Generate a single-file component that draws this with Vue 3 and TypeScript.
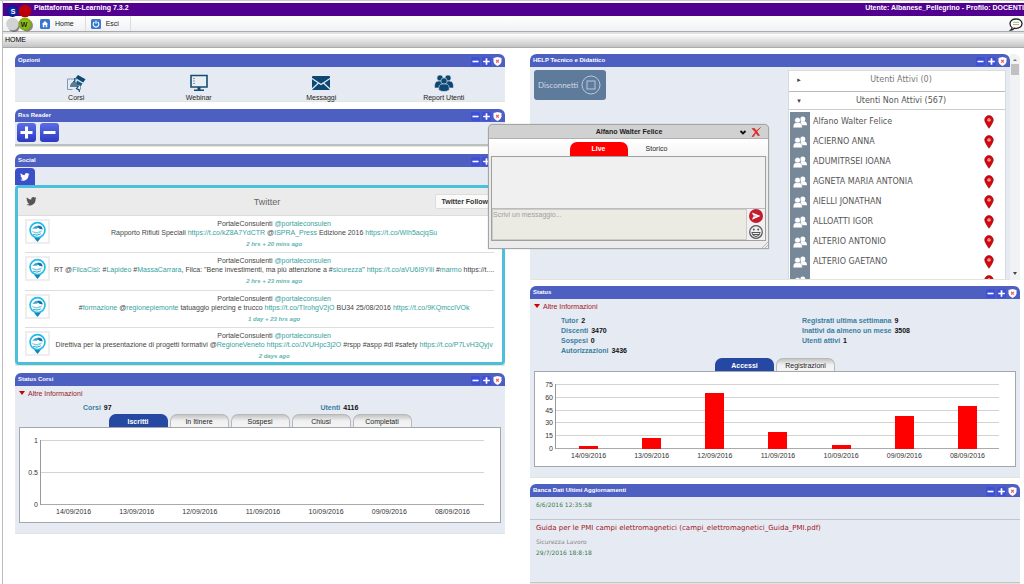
<script setup lang="ts">
import { ref } from 'vue'

interface Piece {
  text: string
  link?: boolean
}
interface Tweet {
  pieces: Piece[]
  time: string
}

const controls = [
  { icon: 'minus', label: 'Riduci' },
  { icon: 'plus', label: 'Espandi' },
  { icon: 'shield', label: 'Chiudi' },
]

const options = [
  { icon: 'course', label: 'Corsi' },
  { icon: 'screen', label: 'Webinar' },
  { icon: 'mail', label: 'Messaggi' },
  { icon: 'group', label: 'Report Utenti' },
]

const t = (text: string): Piece => ({ text })
const l = (text: string): Piece => ({ text, link: true })

const tweets: Tweet[] = [
  {
    pieces: [t('Rapporto Rifiuti Speciali '), l('https://t.co/kZ8A7YdCTR'), t(' @'), l('ISPRA_Press'), t(' Edizione 2016 '), l('https://t.co/WIh5acjqSu')],
    time: '2 hrs + 20 mins ago',
  },
  {
    pieces: [t('RT @'), l('FilcaCisl'), t(': #'), l('Lapideo'), t(' #'), l('MassaCarrara'), t(', Filca: "Bene investimenti, ma più attenzione a #'), l('sicurezza'), t('" '), l('https://t.co/aVU6I9YIli'), t(' #'), l('marmo'), t(' https://t....')],
    time: '2 hrs + 23 mins ago',
  },
  {
    pieces: [t('#'), l('formazione'), t(' @'), l('regionepiemonte'), t(' tatuaggio piercing e trucco '), l('https://t.co/TIrohgV2jO'), t(' BU34 25/08/2016 '), l('https://t.co/9KQmccIVOk')],
    time: '1 day + 23 hrs ago',
  },
  {
    pieces: [t('Direttiva per la presentazione di progetti formativi @'), l('RegioneVeneto'), t(' '), l('https://t.co/JVUHpc3j2O'), t(' #rspp #aspp #dl #safety '), l('https://t.co/P7LvH3Qyjv')],
    time: '2 days ago',
  },
]

const users = [
  'Alfano Walter Felice', 'ACIERNO ANNA', 'ADUMITRSEI IOANA', 'AGNETA MARIA ANTONIA', 'AIELLI JONATHAN',
  'ALLOATTI IGOR', 'ALTERIO ANTONIO', 'ALTERIO GAETANO', '',
]

const days = ['14/09/2016', '13/09/2016', '12/09/2016', '11/09/2016', '10/09/2016', '09/09/2016', '08/09/2016']
const accesses = [4, 13, 65, 20, 5, 38, 50]
const accessMax = 75
const accessScale = [75, 60, 45, 30, 15, 0]
const courseScale = ['1', '0.5', '0']

const courseTabs = ['Iscritti', 'In Itinere', 'Sospesi', 'Chiusi', 'Completati']
const statusTabs = ['Accessi', 'Registrazioni']
const courseTab = ref('Iscritti')
const statusTab = ref('Accessi')
const message = ref('')

const statusLeft = [['Tutor', '2'], ['Discenti', '3470'], ['Sospesi', '0'], ['Autorizzazioni', '3436']]
const statusRight = [['Registrati ultima settimana', '9'], ['Inattivi da almeno un mese', '3508'], ['Utenti attivi', '1']]
</script>

<template>
  <svg class="sprite" aria-hidden="true">
    <symbol id="i-minus" viewBox="0 0 9 9"><rect width="9" height="9" rx="1.5" fill="#3f50d6" /><path d="M1.500 4.500h6" stroke="#fff" stroke-width="1.600" /></symbol>
    <symbol id="i-plus" viewBox="0 0 9 9"><rect width="9" height="9" rx="1.5" fill="#3f50d6" /><path d="M1.200 4.500h6.600M4.500 1.200v6.600" stroke="#fff" stroke-width="1.700" /></symbol>
    <symbol id="i-shield" viewBox="0 0 9 9"><path d="M4.5 0 8.500 1v3.500Q8.200 7.400 4.5 9 .8 7.400.5 4.500V1z" fill="#fff" /><path d="M3.200 2.900l2.600 2.800M5.800 2.900 3.200 5.700" stroke="#f0566a" stroke-width="1.200" /></symbol>
    <symbol id="i-course" viewBox="0 0 20 18">
      <path d="M11 5H1.500v10.500h5M14.500 11v4.500h-2" fill="none" stroke="#7f99ad" stroke-width="1" />
      <path d="M4 13q0-5 5-5.500l4 3-1 2.500z" fill="#5c7d97" />
      <path d="M9.500 4 12 1l7.500 4.200-2.300 3.200z" fill="#0f4a73" />
      <path d="M11 6.500l5.500 3-1.500 2.500q-3-.2-4.800-2.500z" fill="#1d5d88" />
      <path d="M8.800 4v3l-1.500 1M12.500 12l-2 2.500 2.500 1.500.5 2" fill="none" stroke="#0f4a73" stroke-width="1.200" />
    </symbol>
    <symbol id="i-screen" viewBox="0 0 20 18">
      <path d="M2 1.500h16v11.500H2z" fill="#e9eef4" stroke="#174c70" stroke-width="1.600" />
      <path d="M4.500 4.500h1M4.500 7h1M4.500 9.500h1" stroke="#174c70" stroke-width="1" />
      <path d="M8.500 13h3v2.500H15V17H5v-1.500h3.500z" fill="#174c70" />
    </symbol>
    <symbol id="i-mail" viewBox="0 0 20 18">
      <rect x="1" y="2" width="18" height="14" rx="1" fill="#0b4873" />
      <path d="M1 4.500l9 6 9-6M1 15l6.500-6M19 15l-6.500-6" fill="none" stroke="#e7ebf3" stroke-width="1.200" />
    </symbol>
    <symbol id="i-group" viewBox="0 0 20 18">
      <g fill="#0b4873" stroke="#e7ebf3" stroke-width=".6">
        <circle cx="6" cy="4" r="3.100" /><circle cx="14" cy="4" r="3.100" />
        <path d="M.5 14q-.5-7 4-7h3q2.500.5 2.500 7zM10 14q0-6.500 2.500-7h3q4.500 0 4 7z" />
        <circle cx="10" cy="7" r="3.200" /><path d="M4.700 16q-.2-6 3.300-6h4q3.500 0 3.300 6-5.300 3.200-10.600 0z" />
      </g>
    </symbol>
    <symbol id="i-bird" viewBox="0 0 24 24">
      <path d="M23 4.600a9 9 0 0 1-2.700.8 4.600 4.600 0 0 0 2-2.600 9 9 0 0 1-2.900 1.100A4.600 4.600 0 0 0 11.500 8 13 13 0 0 1 2 3.200a4.600 4.600 0 0 0 1.400 6.200 4.600 4.600 0 0 1-2-.6 4.600 4.600 0 0 0 3.600 4.600 4.600 4.600 0 0 1-2 .1 4.600 4.600 0 0 0 4.300 3.200A9.300 9.300 0 0 1 .5 18.600 13 13 0 0 0 20.700 7a9 9 0 0 0 2.300-2.400z" />
    </symbol>
    <symbol id="i-portal" viewBox="0 0 22 22">
      <path d="M7 17h8l-4 5z" fill="#1383b8" />
      <circle cx="11" cy="9.500" r="7.800" fill="#fff" stroke="#22bce8" stroke-width="1.800" />
      <path d="M5.500 8q4-4.500 9.500-2.800l1.500 3.300q-4-2-7-.3z" fill="#3ba4cf" />
      <path d="M11 5.200q4.500 0 5.500 3.600l-3.500-.8z" fill="#11699d" />
      <path d="M5 10q3 2 6.500 1.200L16 9.800q-1 3-5 3.200-5 .3-6-3z" fill="#8ccce4" />
      <path d="M6.500 14q4 1.800 8-.5" fill="none" stroke="#2e9cc9" stroke-width="1" />
    </symbol>
    <symbol id="i-people" viewBox="0 0 14 12">
      <g fill="#fff"><circle cx="9.800" cy="2.900" r="2.500" /><path d="M7.500 5.200h4.300q2.300.8 2.200 4H8z" /></g>
      <g fill="#fff" stroke="#778899" stroke-width=".4"><circle cx="4.600" cy="4.200" r="2.800" /><path d="M.2 11.800Q0 7.200 2.700 6.700h3.900Q9.500 7.200 9.200 11.800z" /></g>
    </symbol>
    <symbol id="i-pin" viewBox="0 0 10 14">
      <path d="M5 .6A4.300 4.300 0 0 0 .7 5Q.8 7.500 5 13.300 9.200 7.500 9.300 5A4.300 4.300 0 0 0 5 .6z" fill="#d5060c" stroke="#8d1115" stroke-width=".6" />
      <circle cx="5" cy="4.900" r="1.700" fill="#f3c9c9" /><path d="M4 4.900h2" stroke="#c22" stroke-width=".7" />
    </symbol>
  </svg>

  <div class="page">
    <header class="top">
      <div class="brand-bar">
        <h1>Piattaforma E-Learning 7.3.2</h1>
        <span>Utente: Albanese_Pellegrino - Profilo: DOCENTI</span>
      </div>
      <nav class="menu">
        <a href="#">
          <svg viewBox="0 0 10 10"><rect width="10" height="10" rx="1.500" fill="#3676cf" /><path d="M1.800 5.200 5 2l3.200 3.200h-1V8.200H5.700V6H4.300v2.200H2.800v-3z" fill="#fff" /></svg>
          Home
        </a>
        <a href="#">
          <svg viewBox="0 0 10 10"><rect width="10" height="10" rx="1.500" fill="#3676cf" /><path d="M3.400 3a2.800 2.800 0 1 0 3.200 0M5 1.600v3.200" fill="none" stroke="#fff" stroke-width="1.100" /></svg>
          Esci
        </a>
        <button class="bubble" type="button" aria-label="Chat">
          <svg viewBox="0 0 14 13"><path d="M7 1c3.500 0 6 1.900 6 4.600S10.500 10.300 7 10.300q-1 0-1.800-.2Q4 12 1.800 12q1.300-1 1.200-2.500Q1 8.300 1 5.600C1 2.900 3.500 1 7 1z" fill="#fff" stroke="#222" stroke-width="1.300" /><path d="M4 4.300h6" stroke="#80cf80" /><path d="M4 6.600h6" stroke="#eb8a8a" /></svg>
        </button>
      </nav>
      <div class="crumb">HOME</div>
      <svg class="logo" viewBox="0 0 30 30" role="img" aria-label="SW">
        <defs>
          <radialGradient id="gb"><stop offset="0" stop-color="#1d38c4" /><stop offset="1" stop-color="#06198c" /></radialGradient>
          <radialGradient id="gg"><stop offset="0" stop-color="#a6d614" /><stop offset="1" stop-color="#7da60c" /></radialGradient>
        </defs>
        <g fill="#555" opacity=".7"><circle cx="9" cy="23" r="6" /><circle cx="22" cy="22.500" r="6" /></g>
        <circle cx="7.500" cy="8" r="6" fill="url(#gb)" /><circle cx="20" cy="8" r="6.300" fill="#bd0008" />
        <circle cx="7.500" cy="21" r="6.300" fill="#d2d2d2" /><circle cx="20" cy="21" r="6.500" fill="url(#gg)" />
        <text x="8" y="11" fill="#fff">S</text><text x="19" y="23.500" fill="#123">W</text>
      </svg>
    </header>

    <main class="columns">
      <div class="column">
        <section class="panel">
          <div class="bar"><h2>Opzioni</h2><button v-for="c in controls" :key="c.icon" type="button" :aria-label="c.label"><svg><use :href="'#i-' + c.icon" /></svg></button></div>
          <div class="options">
            <a v-for="o in options" :key="o.label" href="#"><svg><use :href="'#i-' + o.icon" /></svg>{{ o.label }}</a>
          </div>
        </section>

        <section class="panel">
          <div class="bar"><h2>Rss Reader</h2><button v-for="c in controls" :key="c.icon" type="button" :aria-label="c.label"><svg><use :href="'#i-' + c.icon" /></svg></button></div>
          <div class="rss">
            <button type="button" aria-label="Aggiungi"><svg viewBox="0 0 19 19"><path d="M9.500 3.500v12M3.500 9.500h12" /></svg></button>
            <button type="button" aria-label="Rimuovi"><svg viewBox="0 0 19 19"><path d="M3.500 9.500h12" /></svg></button>
          </div>
        </section>

        <section class="panel">
          <div class="bar"><h2>Social</h2><button v-for="c in controls" :key="c.icon" type="button" :aria-label="c.label"><svg><use :href="'#i-' + c.icon" /></svg></button></div>
          <div class="social-tabs"><button type="button" aria-label="Twitter"><svg><use href="#i-bird" /></svg></button></div>
          <div class="feed">
            <div class="feed-head">
              <svg><use href="#i-bird" /></svg>
              <h3>Twitter</h3>
              <div class="follow"><button type="button">Twitter Follow</button></div>
            </div>
            <ul>
              <li v-for="tweet in tweets" :key="tweet.time">
                <span class="avatar"><svg><use href="#i-portal" /></svg></span>
                <div class="tweet">
                  <p>PortaleConsulenti <a href="#">@portaleconsulen</a></p>
                  <p><template v-for="(piece, i) in tweet.pieces" :key="i"><a v-if="piece.link" href="#">{{ piece.text }}</a><template v-else>{{ piece.text }}</template></template></p>
                  <time>{{ tweet.time }}</time>
                </div>
              </li>
            </ul>
          </div>
        </section>

        <section class="panel status">
          <div class="bar"><h2>Status Corsi</h2><button v-for="c in controls" :key="c.icon" type="button" :aria-label="c.label"><svg><use :href="'#i-' + c.icon" /></svg></button></div>
          <a class="more" href="#">Altre Informazioni</a>
          <div class="stats course-stats">
            <p>Corsi <b>97</b></p>
            <p>Utenti <b>4116</b></p>
          </div>
          <div class="tabs"><button v-for="name in courseTabs" :key="name" type="button" :class="{ on: name === courseTab }" @click="courseTab = name">{{ name }}</button></div>
          <div class="chart">
            <div class="scale"><span v-for="s in courseScale" :key="s">{{ s }}</span></div>
            <div class="grid-lines"><i v-for="s in courseScale" :key="s"></i></div>
            <div class="days"><span v-for="d in days" :key="d">{{ d }}</span></div>
          </div>
        </section>
      </div>

      <div class="column">
        <section class="help-frame">
          <div class="help panel">
            <div class="bar"><h2>HELP Tecnico e Didattico</h2><button v-for="c in controls" :key="c.icon" type="button" :aria-label="c.label"><svg><use :href="'#i-' + c.icon" /></svg></button></div>
            <div class="help-body">
              <button class="disconnect" type="button">Disconnetti
                <svg viewBox="0 0 20 20"><circle cx="10" cy="10" r="9" /><rect x="6" y="6" width="8" height="8" /></svg>
              </button>
              <div class="people">
                <button class="fold" type="button"><i>▸</i><span>Utenti Attivi (0)</span></button>
                <button class="fold open" type="button"><i>▾</i><span>Utenti Non Attivi (567)</span></button>
                <ul>
                  <li v-for="(u, i) in users" :key="i">
                    <span class="face"><svg><use href="#i-people" /></svg></span>
                    <span class="name">{{ u }}</span>
                    <svg class="pin"><use href="#i-pin" /></svg>
                  </li>
                </ul>
              </div>
            </div>
          </div>
          <div class="scroll"><i class="up"></i><i class="thumb"></i><i class="down"></i></div>
        </section>

        <section class="panel status">
          <div class="bar"><h2>Status</h2><button v-for="c in controls" :key="c.icon" type="button" :aria-label="c.label"><svg><use :href="'#i-' + c.icon" /></svg></button></div>
          <a class="more" href="#">Altre Informazioni</a>
          <div class="stats user-stats">
            <div><p v-for="s in statusLeft" :key="s[0]">{{ s[0] }} <b>{{ s[1] }}</b></p></div>
            <div><p v-for="s in statusRight" :key="s[0]">{{ s[0] }} <b>{{ s[1] }}</b></p></div>
          </div>
          <div class="tabs"><button v-for="name in statusTabs" :key="name" type="button" :class="{ on: name === statusTab }" @click="statusTab = name">{{ name }}</button></div>
          <div class="chart">
            <div class="scale"><span v-for="s in accessScale" :key="s">{{ s }}</span></div>
            <div class="grid-lines"><i v-for="s in accessScale" :key="s"></i></div>
            <div class="bars"><i v-for="(a, i) in accesses" :key="i" :style="{ height: (a / accessMax) * 100 + '%' }"></i></div>
            <div class="days"><span v-for="d in days" :key="d">{{ d }}</span></div>
          </div>
        </section>

        <section class="panel news">
          <div class="bar"><h2>Banca Dati Ultimi Aggiornamenti</h2><button v-for="c in controls" :key="c.icon" type="button" :aria-label="c.label"><svg><use :href="'#i-' + c.icon" /></svg></button></div>
          <article><time>6/6/2016 12:35:58</time></article>
          <article>
            <a href="#">Guida per le PMI campi elettromagnetici (campi_elettromagnetici_Guida_PMI.pdf)</a>
            <p>Sicurezza Lavoro</p>
            <time>29/7/2016 18:8:18</time>
          </article>
        </section>
      </div>
    </main>

    <div class="chat" role="dialog" aria-label="Alfano Walter Felice">
      <div class="chat-title">
        <h2>Alfano Walter Felice</h2>
        <button type="button" aria-label="Riduci"><svg viewBox="0 0 10 10"><path d="M2.500 4l2.500 2.500L7.500 4" fill="none" stroke="#111" stroke-width="1.800" /></svg></button>
        <button type="button" aria-label="Chiudi"><svg viewBox="0 0 10 10"><path d="M1 1.500h2.500Q6 4.500 8.500 8.500H6.800Q4 4 1 1.500zM9.500.5Q5 3.500 1 9.500h1.500Q5 4.500 9.500.5z" fill="#d22" stroke="#d22" stroke-width=".6" /></svg></button>
      </div>
      <div class="chat-tabs"><button class="live" type="button">Live</button><button type="button">Storico</button></div>
      <div class="chat-box">
        <div class="log"></div>
        <div class="compose">
          <textarea v-model="message" aria-label="Messaggio" placeholder="Scrivi un messaggio..."></textarea>
          <div class="actions">
            <button type="button" aria-label="Invia"><svg viewBox="0 0 14 14"><circle cx="7" cy="7" r="7" fill="#c31c2e" /><path d="M3 3.500 11.500 7 3 10.800l1.200-3.200L8 7 4.200 6.400z" fill="#fff" /></svg></button>
            <button type="button" aria-label="Emoticon"><svg viewBox="0 0 14 14"><g fill="none" stroke="#555"><circle cx="7" cy="7" r="6.300" stroke-width="1.200" /><path d="M2.800 7.500h8.400Q10.500 11.500 7 11.500T2.800 7.500zM4 9.500h6" /></g><circle cx="4.800" cy="4.500" r="1" fill="#555" /><circle cx="9.200" cy="4.500" r="1" fill="#555" /></svg></button>
          </div>
        </div>
      </div>
      <svg class="grip" viewBox="0 0 6 6"><path d="M0 6 6 0M3 6l3-3" stroke="#aaa" stroke-width=".8" /></svg>
    </div>
  </div>
</template>

<style>
html, body { background: #fff; }
</style>

<style scoped>
* { box-sizing: border-box; margin: 0; padding: 0; }
.sprite { position: absolute; width: 0; height: 0; }
svg { display: block; flex: none; }
a { color: inherit; text-decoration: none; }
ul { list-style: none; }
button { border: 0; background: none; font: inherit; color: inherit; cursor: pointer; }
.page { position: relative; min-height: 100vh; font: 7px/10px "Liberation Sans", Arial, sans-serif; color: #222; border-top: 1px solid #ccc; overflow: hidden; }
.page::before { content: ""; position: absolute; left: 2px; top: 0; bottom: 0; width: 1px; background: #bbb; }

.top { position: relative; margin-left: 3px; padding-top: 2px; }
.brand-bar { display: flex; justify-content: space-between; height: 13px; padding-left: 31px; background: #52008f; color: #fff; font-weight: bold; line-height: 10px; white-space: nowrap; }
.brand-bar h1 { font-size: 7px; }
.menu { display: flex; height: 16px; padding-left: 32px; background: linear-gradient(#fff, #f0f1f5); border-bottom: 1px solid #aaa; }
.menu a { display: flex; align-items: center; gap: 5px; padding: 0 11px 0 5px; border-right: 1px solid #ddd; }
.menu a svg { width: 10px; height: 10px; }
.bubble { margin-left: auto; padding: 2px 1px 0 0; }
.bubble svg { width: 14px; height: 13px; }
.crumb { height: 16px; padding: 1px 2px; border-top: 2px solid #e2e2e2; background: linear-gradient(#fff, #c4c4c4); border-bottom: 1px solid #aaa; color: #000; }
.logo { position: absolute; left: 2px; top: 2px; width: 30px; height: 30px; }
.logo text { font: bold 7px "Liberation Sans", sans-serif; text-anchor: middle; }

.columns { display: grid; grid-template-columns: minmax(0, 1fr) minmax(0, 1fr); gap: 25px; align-items: start; padding: 6px 4px 0 15px; }
.column { display: flex; flex-direction: column; gap: 7px; }
.column + .column { gap: 6px; }
.panel { background: #e6ebf3; border-radius: 6px 6px 0 0; border-bottom: 1px solid #e0e6dc; }
.bar { display: flex; align-items: center; gap: 2px; height: 13px; padding: 2px 3px 0; border-radius: 6px 6px 0 0; background: #4d60c2; color: #fff; }
.bar h2 { flex: 1; font: bold 6px/9px "Liberation Sans", Arial, sans-serif; padding-bottom: 2px; }
.bar button svg { width: 9px; height: 9px; }

.options { display: grid; grid-template-columns: repeat(4, 1fr); height: 34px; padding-top: 7px; }
.options a { display: flex; flex-direction: column; align-items: center; gap: 1px; line-height: 9px; }
.options svg { width: 20px; height: 18px; }

.rss { display: flex; gap: 4px; height: 24px; padding: 1px 2px; border-bottom: 2px solid #bdc0c0; }
.rss button { width: 19px; height: 19px; border-radius: 3px; background: linear-gradient(#5a6ce6, #2d3cbf); }
.rss path { stroke: #fff; stroke-width: 3; }

.social-tabs { padding-top: 1px; height: 18px; }
.social-tabs button { width: 20px; height: 17px; padding: 3px 5px; border-radius: 4px 4px 0 0; background: #3c4ec8; fill: #fff; }
.social-tabs svg { width: 10px; height: 10px; }
.feed { border: 3px solid #4ac0dc; border-radius: 4px; background: #fff; }
.feed-head { display: grid; grid-template-columns: 1fr auto 1fr; align-items: center; height: 28px; padding-left: 8px; background: #ebebeb; border-bottom: 1px solid #ddd; border-radius: 3px 3px 0 0; }
.feed-head svg { width: 11px; height: 11px; fill: #555; }
.feed-head h3 { padding-left: 6px; font-size: 9px; font-weight: normal; color: #666; }
.follow { display: flex; justify-content: flex-end; padding-right: 8px; }
.follow button { height: 15px; padding: 0 5px; border: 1px solid #ddd; border-radius: 2px; background: #fafafa; font-weight: bold; color: #333; }
.feed ul { display: grid; grid-template-rows: 37px 38px 37px 34px; padding: 0 8px 0 7px; }
.feed li { display: flex; gap: 4px; padding-top: 3px; border-bottom: 1px solid #ddd; }
.feed li:last-child { border-bottom: 0; }
.avatar { flex: none; width: 25px; height: 25px; border: 2px solid #eee; }
.avatar svg { width: 21px; height: 21px; }
.tweet { flex: 1; min-width: 0; display: flex; flex-direction: column; align-items: center; line-height: 9px; color: #444; white-space: nowrap; }
.tweet a { color: #36a3a0; }
.tweet time { margin-top: 3px; font-size: 6px; font-style: italic; font-weight: bold; color: #62b3ae; }

.status { padding-bottom: 10px; }
.more { display: block; padding: 3px 4px 2px; color: #a11522; }
.more::before { content: ""; display: inline-block; margin-right: 3px; border: 3px solid transparent; border-top: 4px solid #c00; border-bottom: 0; vertical-align: 1px; }
.stats { display: grid; color: #3a7f9f; font-weight: bold; }
.stats b { margin-left: 1px; color: #111; }
.course-stats { grid-template-columns: 9fr 7fr; padding: 2px 0 1px 68px; }
.user-stats { grid-template-columns: 21fr 19fr; padding: 2px 0 2px 31px; }
.tabs { display: flex; justify-content: center; gap: 2px; }
.tabs button { width: 59px; height: 13px; border-radius: 7px 7px 0 0; border: 1px solid #b8b8b8; border-bottom: 0; background: linear-gradient(#c4c4c4, #f1f1f1 50%, #f4f4f4); line-height: 11px; }
.tabs .on { border-color: #2548a2; background: #2548a2; color: #fff; font-weight: bold; }
.chart { display: grid; grid-template: 65px 1fr / 18px 1fr; column-gap: 4px; height: 96px; margin: 0 4px; padding: 12px 16px 0 0; border: 1px solid #a3a6ad; background: #fff; line-height: 9px; color: #333; }
.scale { grid-area: 1 / 1; display: flex; flex-direction: column; justify-content: space-between; text-align: right; margin: -4px 0; }
.grid-lines { grid-area: 1 / 2; display: flex; flex-direction: column; justify-content: space-between; border-left: 1px solid #999; margin-left: -2px; }
.grid-lines i { height: 1px; background: #d3d3d3; }
.grid-lines i:last-child { background: #aaa; }
.bars { grid-area: 1 / 2; display: flex; align-items: flex-end; }
.bars i { width: 19px; margin: 0 auto; background: #f00; }
.days { grid-area: 2 / 2; display: flex; padding-top: 2px; }
.days span { flex: 1 1 0; min-width: 0; text-align: center; }

.help-frame { display: flex; height: 226px; overflow: hidden; }
.help { flex: 1; min-width: 0; overflow: hidden; }
.help-body { display: flex; justify-content: space-between; align-items: flex-start; padding: 3px 4px 0; }
.disconnect { display: flex; align-items: center; gap: 3px; height: 30px; padding: 0 5px 0 4px; border-radius: 3px; background: #5f7b9c; color: #ccd8e6; font: 8px/10px Lato, sans-serif; }
.disconnect svg { width: 20px; height: 20px; fill: none; stroke: #b9c8da; }
.people { width: 218px; font-family: "DejaVu Sans", Verdana, sans-serif; font-size: 8px; background: #fff; border: 1px solid #d6dade; border-top: 0; }
.fold { display: flex; align-items: center; width: 100%; height: 19px; padding: 0 6px; border-top: 1px solid #ddd; color: #777; background: #fff; margin-bottom: 2px; }
.fold.open { color: #555; border-top: 1px solid #bbb; border-bottom: 1px solid #ccc; }
.fold i { width: 8px; font-style: normal; font-size: 7px; color: #444; }
.fold span { flex: 1; }
.people li { display: flex; height: 20px; padding-right: 11px; }
.face { width: 20px; height: 20px; margin-left: 1px; padding: 4px 3px; background: #778899; }
.face svg { width: 14px; height: 12px; }
.name { flex: 1; padding: 5px 3px 0; color: #555; }
.pin { width: 10px; height: 14px; margin-top: 3px; }
.scroll { display: flex; flex-direction: column; align-items: center; width: 10px; padding: 5px 0; border-radius: 0 6px 0 0; background: #f1f2f3; }
.scroll i { border: 2px solid transparent; }
.scroll .up { border-top: 0; border-bottom-color: #777; }
.scroll .thumb { width: 8px; height: 11px; margin-top: 3px; border: 0; background: #c1c1c1; }
.scroll .down { margin-top: auto; border-bottom: 0; border-top: 3px solid #444; }

.news { font-family: "DejaVu Sans", Verdana, sans-serif; min-height: 99px; }
.news article { padding: 2px 6px; border-bottom: 1px solid #c2c6cc; font-size: 6px; line-height: 11px; }
.news article:first-of-type { height: 23px; }
.news article:last-of-type { height: 63px; }
.news a { font-size: 7px; line-height: 11px; color: #a11522; }
.news p { color: #888; padding-top: 2px; }
.news time { display: block; color: #3b7a4a; }

.chat { position: absolute; left: calc(50% - 24px); top: 123px; width: 281px; border: 1px solid #a5a5a5; border-radius: 5px 5px 0 0; background: #ececec; box-shadow: 0 0 1px #888; }
.chat-title { display: flex; align-items: center; gap: 3px; height: 14px; padding: 0 7px 0 34px; border-radius: 4px 4px 0 0; background: #d1d1d1; border-bottom: 1px solid #b0b0b0; }
.chat-title h2 { flex: 1; font-size: 7px; line-height: 10px; text-align: center; }
.chat-title button svg { width: 10px; height: 10px; }
.chat-tabs { display: flex; justify-content: center; height: 17px; padding: 3px 2px 0 0; background: linear-gradient(#fff, #f5f5f5); }
.chat-tabs button { width: 58px; height: 14px; border-radius: 7px 7px 0 0; }
.chat-tabs .live { background: #f00; color: #fff; font-weight: bold; }
.chat-box { margin: 0 2px 7px 2px; border: 1px solid #a0a0a0; background: #f0f0f0; }
.log { height: 51px; }
.compose { display: flex; border-top: 1px solid #bbb; }
textarea { flex: 1; min-width: 0; height: 31px; resize: none; border: 1px solid #ccc; background: #ebebe4; font: 7px/9px "Liberation Sans", sans-serif; }
textarea::placeholder { color: #a0a0a0; }
.actions { display: flex; flex-direction: column; gap: 2px; padding: 0 2px; }
.actions svg { width: 14px; height: 14px; }
.grip { position: absolute; right: 0; bottom: 0; width: 6px; height: 6px; }
</style>
